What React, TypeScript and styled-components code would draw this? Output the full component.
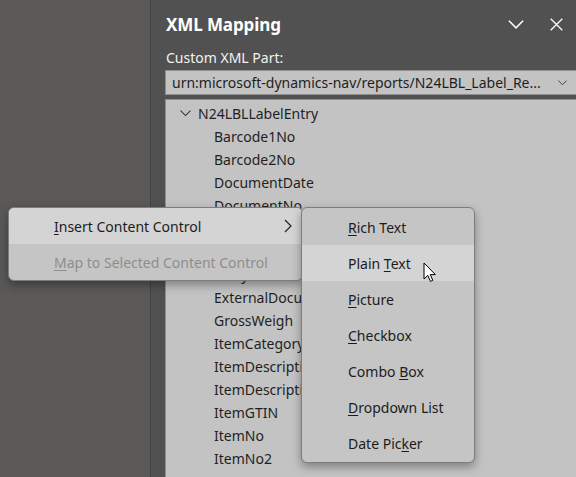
import styled, { createGlobalStyle } from 'styled-components';

const GlobalStyle = createGlobalStyle`
  html, body {
    margin: 0;
    padding: 0;
    width: 576px;
    height: 477px;
    overflow: hidden;
    background: #5a5958;
  }
  * { box-sizing: border-box; }
`;

const font = `'Noto Sans', 'Open Sans', 'Liberation Sans', sans-serif`;

const Screen = styled.div`
  position: relative;
  display: flex;
  width: 576px;
  height: 477px;
  overflow: hidden;
  font-family: ${font};
`;

const DocArea = styled.div`
  width: 151px;
  flex-shrink: 0;
  background: #5a5958;
  border-right: 1px solid #444444;
`;

const Pane = styled.div`
  flex: 1;
  display: flex;
  flex-direction: column;
  background: #515151;
  padding-left: 14px;
  min-width: 0;
`;

const PaneHeader = styled.div`
  display: flex;
  align-items: center;
  height: 48px;
  padding-top: 1px;
`;

const Title = styled.div`
  flex: 1;
  color: #ffffff;
  font-size: 17px;
  font-weight: 700;
  letter-spacing: -0.1px;
  padding-left: 1px;
`;

const IconButton = styled.div`
  width: 40px;
  height: 30px;
  display: flex;
  align-items: center;
  justify-content: center;
`;

const Label = styled.div`
  color: #f2f2f2;
  font-size: 14px;
  height: 22px;
  line-height: 20px;
  padding-left: 1px;
`;

const Select = styled.div`
  display: flex;
  align-items: center;
  height: 25px;
  width: 420px;
  background: #c3c3c3;
  border: 1px solid #8f8f8f;
  border-right: none;
  padding-left: 6px;
  color: #1e1e1e;
  font-size: 14px;
  white-space: nowrap;
`;

const SelectText = styled.span`
  flex: 1;
  overflow: hidden;
`;

const SelectArrow = styled.span`
  width: 28px;
  display: flex;
  justify-content: center;
  margin-right: 9px;
`;

const Tree = styled.div`
  margin-top: 4px;
  flex: 1;
  background: #c3c3c3;
  border-left: 1px solid #8f8f8f;
  border-top: 1px solid #8f8f8f;
  padding-top: 2px;
`;

const TreeRow = styled.div<{ $level: number }>`
  display: flex;
  align-items: center;
  height: 23px;
  padding-left: ${(p) => (p.$level === 0 ? 14 : 48)}px;
  color: #1f1f1f;
  font-size: 14px;
  white-space: nowrap;
`;

const Twisty = styled.span`
  width: 18px;
  display: flex;
  align-items: center;
`;

const Menu = styled.div<{ $left: number; $top: number; $width: number; $pad: number }>`
  position: absolute;
  left: ${(p) => p.$left}px;
  top: ${(p) => p.$top}px;
  width: ${(p) => p.$width}px;
  background: #c5c5c5;
  border: 1px solid #7d7d7d;
  border-radius: 6px;
  overflow: hidden;
  box-shadow: 0 4px 10px rgba(0, 0, 0, 0.35);
  padding: ${(p) => p.$pad}px 0;
`;

const MenuItem = styled.div<{ $active?: boolean; $disabled?: boolean; $indent: number }>`
  display: flex;
  align-items: center;
  height: 36px;
  padding-left: ${(p) => p.$indent}px;
  padding-right: 10px;
  background: ${(p) => (p.$active ? '#d4d4d4' : 'transparent')};
  color: ${(p) => (p.$disabled ? '#8e8e8e' : '#1c1c1c')};
  font-size: 14px;
  white-space: nowrap;
`;

const ItemText = styled.span`
  flex: 1;
`;

const Key = styled.span`
  text-decoration: underline;
  text-underline-offset: 2px;
`;

const Pointer = styled.svg`
  position: absolute;
  left: 423px;
  top: 262px;
`;

const Chevron = ({ size = 14, color = '#ffffff' }: { size?: number; color?: string }) => (
  <svg width={size} height={size / 2 + 1} viewBox="0 0 14 8">
    <path d="M0.7 0.7 L7 7 L13.3 0.7" fill="none" stroke={color} strokeWidth="1.3" />
  </svg>
);

const items = [
  'Barcode1No',
  'Barcode2No',
  'DocumentDate',
  'DocumentNo',
  'DocumentType',
  'DueDate',
  'EntryNo',
  'ExternalDocumentNo',
  'GrossWeigh',
  'ItemCategoryCode',
  'ItemDescription',
  'ItemDescription2',
  'ItemGTIN',
  'ItemNo',
  'ItemNo2',
];

const label = (text: string, key: number) => (
  <>
    {text.slice(0, key)}
    <Key>{text[key]}</Key>
    {text.slice(key + 1)}
  </>
);

const subItems: [string, number][] = [
  ['Rich Text', 0],
  ['Plain Text', 6],
  ['Picture', 0],
  ['Checkbox', 0],
  ['Combo Box', 6],
  ['Dropdown List', 0],
  ['Date Picker', 8],
];

export default function App() {
  return (
    <>
      <GlobalStyle />
      <Screen>
        <DocArea />
        <Pane>
          <PaneHeader>
            <Title>XML Mapping</Title>
            <IconButton>
              <Chevron size={16} />
            </IconButton>
            <IconButton>
              <svg width="13" height="13" viewBox="0 0 13 13">
                <path d="M0.7 0.7 L12.3 12.3 M12.3 0.7 L0.7 12.3" stroke="#fff" strokeWidth="1.3" />
              </svg>
            </IconButton>
          </PaneHeader>
          <Label>Custom XML Part:</Label>
          <Select>
            <SelectText>urn:microsoft-dynamics-nav/reports/N24LBL_Label_Re...</SelectText>
            <SelectArrow>
              <Chevron size={9} color="#222" />
            </SelectArrow>
          </Select>
          <Tree>
            <TreeRow $level={0}>
              <Twisty>
                <Chevron size={11} color="#333" />
              </Twisty>
              N24LBLLabelEntry
            </TreeRow>
            {items.map((it) => (
              <TreeRow key={it} $level={1}>
                {it}
              </TreeRow>
            ))}
          </Tree>
        </Pane>

        <Menu $left={8} $top={207} $width={295} $pad={0}>
          <MenuItem $active $indent={45}>
            <ItemText>{label('Insert Content Control', 0)}</ItemText>
            <svg width="8" height="14" viewBox="0 0 8 14">
              <path d="M1 1 L7 7 L1 13" fill="none" stroke="#222" strokeWidth="1.2" />
            </svg>
          </MenuItem>
          <MenuItem $disabled $indent={45}>
            <ItemText>{label('Map to Selected Content Control', 0)}</ItemText>
          </MenuItem>
        </Menu>

        <Menu $left={301} $top={207} $width={174} $pad={1}>
          {subItems.map(([t, k]) => (
            <MenuItem key={t} $active={t === 'Plain Text'} $indent={46}>
              <ItemText>{label(t, k)}</ItemText>
            </MenuItem>
          ))}
        </Menu>

        <Pointer width="14" height="21" viewBox="0 0 14 21">
          <path
            d="M1 1 L1 17 L4.8 13.4 L7.4 19.4 L9.8 18.4 L7.3 12.6 L12.4 12.6 Z"
            fill="#fff"
            stroke="#000"
            strokeWidth="1"
            strokeLinejoin="round"
          />
        </Pointer>
      </Screen>
    </>
  );
}
